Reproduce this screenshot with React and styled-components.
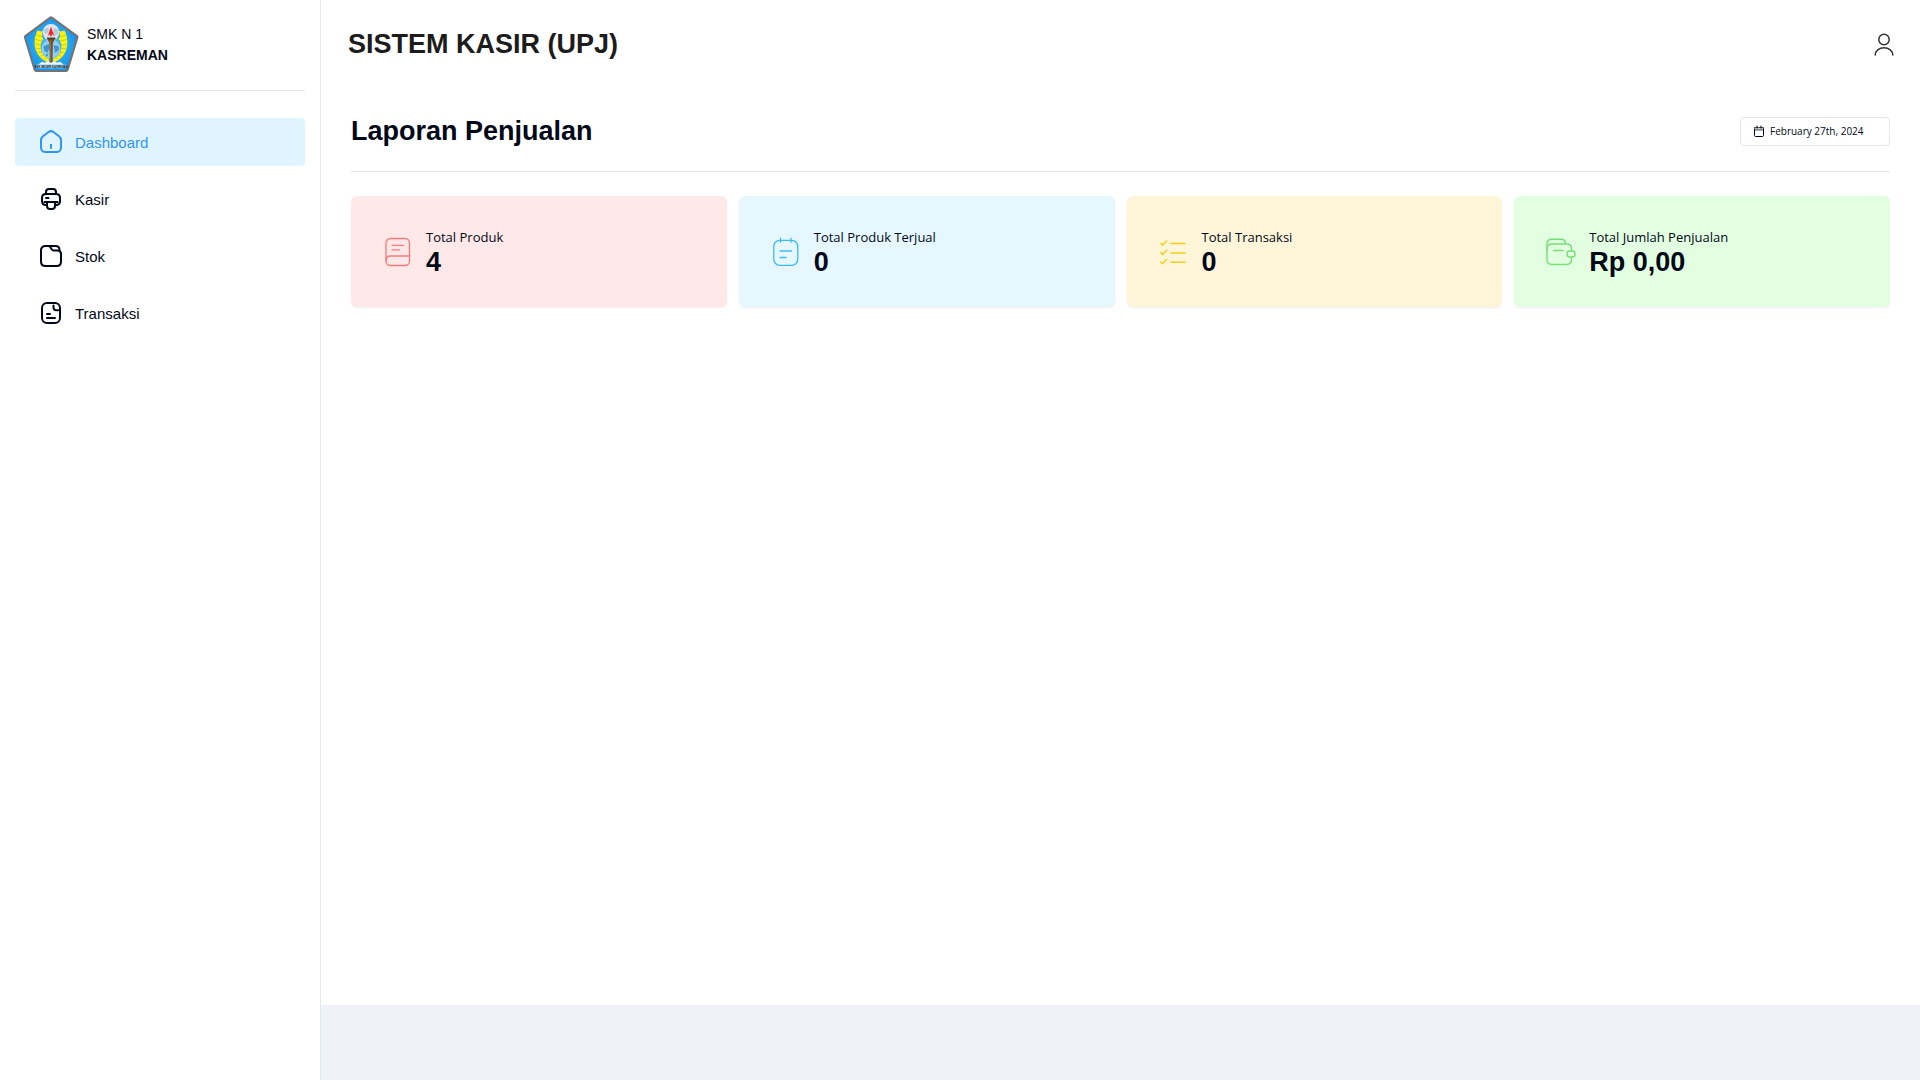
import React from "react";
import styled, { createGlobalStyle } from "styled-components";

const GlobalStyle = createGlobalStyle`
  *, *::before, *::after { box-sizing: border-box; }
  body {
    margin: 0;
    background: #ffffff;
    color: #020817;
    font-family: "Liberation Sans", Arial, sans-serif;
  }
  h1, h2, p { margin: 0; }
`;

const Shell = styled.div`
  display: flex;
  min-height: 100vh;
`;

const Sidebar = styled.aside`
  flex: 0 0 321px;
  padding: 0 15px;
  border-right: 1px solid #e2e8f0;
`;

const Brand = styled.div`
  display: flex;
  align-items: center;
  gap: 8px;
  height: 91px;
  padding: 0 8px 2px;
  border-bottom: 1px solid #e2e8f0;
`;

const BrandText = styled.p`
  padding-top: 2px;
  font-size: 14px;
  line-height: 21px;
`;

const BrandName = styled.strong`
  display: block;
  font-weight: 700;
`;

const Nav = styled.nav`
  display: flex;
  flex-direction: column;
  gap: 9px;
  margin-top: 27px;
`;

const NavLink = styled.a`
  display: flex;
  align-items: center;
  gap: 12px;
  height: 48px;
  padding: 0 24px;
  border-radius: 4px;
  font-size: 15px;
  line-height: 24px;
  text-decoration: none;
  color: ${(p) => (p.$active ? "#2f95f3" : "#020817")};
  background: ${(p) => (p.$active ? "#e0f4ff" : "transparent")};
`;

const NavLabel = styled.span`
  padding-top: 2px;
`;

const Page = styled.div`
  flex: 1;
  min-width: 0;
  display: flex;
  flex-direction: column;
`;

const TopBar = styled.header`
  display: flex;
  align-items: center;
  justify-content: space-between;
  height: 88px;
  padding: 0 24px 0 27px;
`;

const AppTitle = styled.h1`
  font-size: 27px;
  line-height: 32px;
  font-weight: 700;
  color: #1c1c1c;
`;

const IconButton = styled.button`
  display: flex;
  padding: 0;
  border: 0;
  background: none;
  color: #333333;
  cursor: pointer;
`;

const Content = styled.main`
  flex: 1;
  padding: 0 30px;
`;

const ReportHead = styled.div`
  display: flex;
  align-items: center;
  justify-content: space-between;
  height: 84px;
  padding-top: 3px;
  margin-bottom: 24px;
  border-bottom: 1px solid #e2e8f0;
`;

const ReportTitle = styled.h2`
  font-size: 27px;
  line-height: 32px;
  font-weight: 700;
`;

const DateButton = styled.button`
  display: flex;
  align-items: center;
  gap: 5px;
  width: 150px;
  height: 29px;
  padding: 0 12px;
  border: 1px solid #e2e8f0;
  border-radius: 4px;
  background: #ffffff;
  color: #020817;
  font-family: "Open Sans", "Noto Sans", sans-serif;
  font-size: 10px;
  line-height: 16px;
  white-space: nowrap;
  cursor: pointer;
`;

const Cards = styled.section`
  display: grid;
  grid-template-columns: repeat(4, 1fr);
  gap: 12px;
`;

const Card = styled.article`
  display: flex;
  align-items: center;
  gap: 13px;
  height: 111px;
  padding: 0 32px;
  border-radius: 6px;
  background: ${(p) => p.$bg};
  box-shadow: 0 1px 2px rgba(0, 0, 0, 0.07);
`;

const CardIcon = styled.span`
  display: flex;
  color: ${(p) => p.$color};
`;

const CardText = styled.div`
  padding-top: 3px;
`;

const CardLabel = styled.p`
  font-family: "Open Sans", "Noto Sans", sans-serif;
  font-size: 13px;
  line-height: 18px;
`;

const CardValue = styled.p`
  font-size: 27px;
  line-height: 32px;
  font-weight: 700;
`;

const Footer = styled.footer`
  height: 75px;
  background: #eff3f8;
`;

const Icon = ({ size = 24, stroke = 2, children }) => (
  <svg
    width={size}
    height={size}
    viewBox={`0 0 ${size} ${size}`}
    fill="none"
    stroke="currentColor"
    strokeWidth={stroke}
    strokeLinecap="round"
    strokeLinejoin="round"
    aria-hidden="true"
  >
    {children}
  </svg>
);

const HomeIcon = () => (
  <Icon>
    <path d="M2 10.200c0-1.700.7-3 2-4L9.600 2c1.500-1.100 3.300-1.100 4.800 0L20 6.200c1.300 1 2 2.300 2 4v7.300a4.500 4.500 0 0 1-4.500 4.500h-11A4.500 4.500 0 0 1 2 17.500z" />
    <path d="M12 14v4.700" strokeLinecap="butt" />
  </Icon>
);

const PrinterIcon = () => (
  <Icon>
    <path d="M7 6.500V5c0-2 1-3 3-3h4c2 0 3 1 3 3v1.500" />
    <path d="M7 18c-2.700 0-4-1.300-4-4v-3c0-2.700 1.300-4 4-4h10c2.700 0 4 1.300 4 4v3c0 2.700-1.300 4-4 4" />
    <path d="M5.500 15h13" />
    <path d="M8 15v4c0 2 1 3 3 3h2c2 0 3-1 3-3v-4" />
    <path d="M7 11h2.500" />
  </Icon>
);

const FolderIcon = () => (
  <Icon>
    <path d="M2 6.500v11C2 20.500 3.500 22 6.500 22h11c3 0 4.500-1.500 4.500-4.500V10c0-2.500-1.200-3.500-3.500-3.500H15c-1.100 0-1.800-.4-2.400-1.300L11.300 3C10.700 2.200 10 2 9 2H6.500C3.500 2 2 3.500 2 6.500z" />
    <path d="M9 2h7.500C19 2 20.500 3.500 20.500 6v1.200" />
  </Icon>
);

const NoteIcon = () => (
  <Icon>
    <rect x="3" y="2" width="18" height="20" rx="5" />
    <path d="M14.500 4.500v2c0 1.700 1 2.700 2.700 2.700h2" />
    <path d="M8 13h3M8 17h8" />
  </Icon>
);

const UserIcon = () => (
  <Icon stroke={1.5}>
    <circle cx="12" cy="7.500" r="5.200" />
    <path d="M3.200 23c0-4 3.900-7.200 8.800-7.200s8.800 3.200 8.800 7.200" />
  </Icon>
);

const CalendarIcon = () => (
  <Icon size={12} stroke={1}>
    <path d="M1.500 4v6.500c0 .6.400 1 1 1h7c.6 0 1-.4 1-1V4" />
    <path d="M1.500 2.500h9v2.500h-9z" opacity="0.7" fill="currentColor" fillOpacity="0.3" />
    <path d="M4 1v2M8 1v2" />
  </Icon>
);

const BookIcon = () => (
  <Icon size={30} stroke={1.3}>
    <rect x="3" y="1.500" width="23.500" height="27" rx="4.500" />
    <path d="M3 23.500c0-3.500 1.500-4.500 4.500-4.500h19" />
    <path d="M9 8.300h11.500M9 12.800h7.500" />
  </Icon>
);

const PlannerIcon = () => (
  <Icon size={30} stroke={1.3}>
    <rect x="2.800" y="3.300" width="24" height="25" rx="6" />
    <path d="M9.500 1.200v4M20 1.200v4" />
    <path d="M9 14h11.500M9 20.500h6" />
  </Icon>
);

const ChecklistIcon = () => (
  <Icon size={30} stroke={1.5}>
    <path d="M12 6.500h14M12 16h14M12 25.300h14" />
    <path d="M1.800 6.500l1.700 1.700L7.600 4M1.800 15.800l1.700 1.700 4.100-4.200M1.800 25.100l1.700 1.700 4.100-4.200" />
  </Icon>
);

const WalletIcon = () => (
  <Icon size={30} stroke={1.4}>
    <path d="M25.500 14v-2.200c0-3-1.800-4.800-4.800-4.800H6C3 7 1 9 1 12v10.500c0 3 2 5 5 5h14.500c3 0 5-2 5-5V20" />
    <path d="M1 13V7c0-3 2-4.800 5-4.800h9c2.600 0 4.400 1.600 4.700 4.500M7.500 13.500h9.500" />
    <rect x="21" y="14" width="8" height="6" rx="2.800" />
  </Icon>
);

/* School crest; wing feathers are the same curves mirrored round x = 123. */
const Wing = () => (
  <g>
    <path d="M83 76c-11 20-12 46-4 63 7 16 18 27 35 33l4-9c-13-6-21-14-24-24-4-14-2-28 6-36-6-8-5-17 0-24-8 1-13 0-17-3z" fill="#fff20a" />
    <path d="M78 90l19 5M75 103l20 5M75 117l19 4M78 130l16 1M85 143l11-1M93 154l9-5M103 163l5-6" stroke="#5d8a35" strokeWidth="1.400" strokeOpacity="0.7" fill="none" />
  </g>
);

const Crest = () => (
  <svg width="56" height="58" viewBox="39 30 168 174" role="img" aria-label="Logo SMK N 1 Kasreman">
    <defs>
      <radialGradient id="crestBlue" cx="50%" cy="50%" r="60%">
        <stop offset="0" stopColor="#45c0fb" />
        <stop offset="1" stopColor="#0f8fe6" />
      </radialGradient>
    </defs>
    <path d="M119 35q4-3 8 0l76 56q4 3 2 8l-29 96q-2 6-8 6H79q-6 0-8-6L42 99q-2-5 2-8z" fill="#77716f" />
    <path d="M123 40l76 56-29 96q-1 4-5 4H81q-4 0-5-4L47 96z" fill="url(#crestBlue)" />
    <circle cx="123" cy="132" r="29" fill="#8fcdf6" />
    <circle cx="123" cy="82" r="25" fill="#e1e5ee" />
    <path d="M101 76l9-8 8 5-4 10-9 4zM132 68l12 6 1 12-9 6-7-9z" fill="#b4c9da" />
    <path d="M101 124l16-7 1 14-7 13-9-8zM131 121l14 2 2 12-12 8zM105 149l10-3-3 9z" fill="#3d94d0" />
    <Wing />
    <g transform="translate(246 0) scale(-1 1)"><Wing /></g>
    <path d="M112 97l11-32 11 32-6-10-5 8-5-8z" fill="#f01818" />
    <path d="M119 86l4-16 4 16-4 5z" fill="#f52727" />
    <path d="M111 98h25l-7 16-2 60h-7l-2-60z" fill="#765021" />
    <path d="M111 98h25v5h-25z" fill="#4d4021" />
    <path d="M122 107v64" stroke="#b1843a" strokeWidth="2" />
    <path d="M84 179l12-9 9 3 9-6 9 7 9-7 9 6 9-3 12 9z" fill="#e9f8ff" />
    <path d="M77 179h93l-3 11H79z" fill="#bcdff2" />
    <text x="123" y="188" textAnchor="middle" fontFamily="Liberation Sans, Arial, sans-serif" fontWeight="700" fontSize="8" fill="#07131d">SMK NEGERI KASREMAN</text>
  </svg>
);

const menu = [
  { label: "Dashboard", icon: HomeIcon, active: true },
  { label: "Kasir", icon: PrinterIcon },
  { label: "Stok", icon: FolderIcon },
  { label: "Transaksi", icon: NoteIcon },
];

const stats = [
  { label: "Total Produk", value: "4", icon: BookIcon, bg: "#ffe9e8", color: "#fb7878" },
  { label: "Total Produk Terjual", value: "0", icon: PlannerIcon, bg: "#e6f7ff", color: "#38bdf8" },
  { label: "Total Transaksi", value: "0", icon: ChecklistIcon, bg: "#fff6da", color: "#facc15" },
  { label: "Total Jumlah Penjualan", value: "Rp 0,00", icon: WalletIcon, bg: "#e3ffe1", color: "#77df77" },
];

export default function App() {
  return (
    <>
      <GlobalStyle />
      <Shell>
        <Sidebar>
          <Brand>
            <Crest />
            <BrandText>
              SMK N 1<BrandName>KASREMAN</BrandName>
            </BrandText>
          </Brand>
          <Nav aria-label="Menu">
            {menu.map(({ label, icon: Glyph, active }) => (
              <NavLink key={label} href="#" $active={active} aria-current={active ? "page" : undefined}>
                <Glyph />
                <NavLabel>{label}</NavLabel>
              </NavLink>
            ))}
          </Nav>
        </Sidebar>
        <Page>
          <TopBar>
            <AppTitle>SISTEM KASIR (UPJ)</AppTitle>
            <IconButton type="button" aria-label="Akun">
              <UserIcon />
            </IconButton>
          </TopBar>
          <Content>
            <ReportHead>
              <ReportTitle>Laporan Penjualan</ReportTitle>
              <DateButton type="button">
                <CalendarIcon />
                February 27th, 2024
              </DateButton>
            </ReportHead>
            <Cards>
              {stats.map(({ label, value, icon: Glyph, bg, color }) => (
                <Card key={label} $bg={bg}>
                  <CardIcon $color={color}>
                    <Glyph />
                  </CardIcon>
                  <CardText>
                    <CardLabel>{label}</CardLabel>
                    <CardValue>{value}</CardValue>
                  </CardText>
                </Card>
              ))}
            </Cards>
          </Content>
          <Footer />
        </Page>
      </Shell>
    </>
  );
}
